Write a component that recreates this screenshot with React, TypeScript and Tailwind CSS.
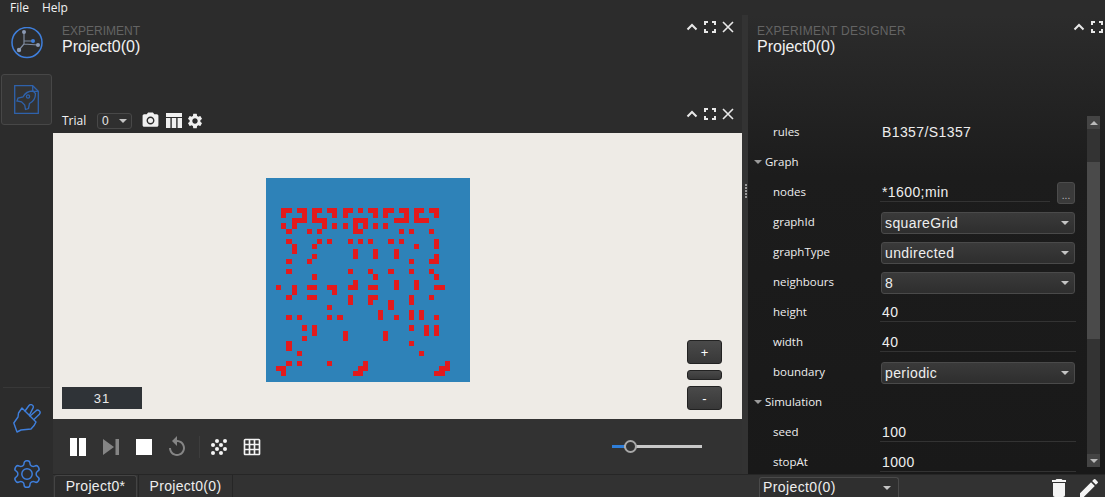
import { MdDelete, MdEdit, MdGridOn, MdPhotoCamera, MdReplay, MdSettings } from "react-icons/md";

// live cells per row of the 40x40 lattice
const cells: Record<number, number[]> = {
  6: [3, 4, 6, 7, 9, 10, 12, 13, 15, 16, 18, 20, 21, 23, 24, 26, 27, 29, 30, 32, 33],
  7: [3, 7, 9, 13, 15, 21, 23, 27, 29, 33],
  8: [5, 6, 7, 9, 10, 11, 17, 18, 19, 25, 26, 27, 29, 30, 31],
  9: [3, 5, 11, 13, 15, 17, 19, 21, 23],
  10: [4, 8, 10, 17, 18, 26, 28, 32],
  12: [4, 10, 12, 16, 18, 20, 24, 26, 33],
  13: [5, 9, 29, 33],
  14: [5, 17, 21, 25],
  15: [9, 17, 21, 25, 33],
  16: [4, 8, 28, 32, 33],
  18: [4, 16, 20, 24, 28, 32],
  19: [9, 21, 33],
  20: [17, 25, 29],
  21: [2, 5, 8, 9, 12, 13, 16, 17, 20, 21, 25, 29, 33, 34],
  22: [5, 13],
  23: [4, 8, 9, 16, 20, 21, 28, 32],
  24: [16, 20, 24, 28],
  25: [12, 24],
  26: [22, 28, 30],
  27: [4, 6, 12, 14, 22, 25, 28, 30, 33],
  29: [7, 9, 28, 31, 33],
  30: [9, 15, 23, 31, 33],
  31: [7, 15, 23],
  32: [4, 28],
  33: [4],
  34: [6, 30],
  36: [4, 6, 12, 19, 35],
  37: [2, 3, 18, 19, 34, 35],
  38: [3, 17, 18, 33, 34],
};

function PanelIcons({ close = true }: { close?: boolean }) {
  return (
    <div className="flex items-center gap-[6px] self-start">
      <svg width="12" height="8" viewBox="0 0 12 8" fill="none" stroke="#e8e8e8" strokeWidth="2">
        <path d="M1.5 6.5 6 2l4.5 4.5" />
      </svg>
      <svg width="12" height="12" viewBox="0 0 12 12" fill="none" stroke="#e8e8e8" strokeWidth="2">
        <path d="M1 4V1h3M8 1h3v3M11 8v3H8M4 11H1V8" />
      </svg>
      {close && (
        <svg width="12" height="12" viewBox="0 0 12 12" fill="none" stroke="#e8e8e8" strokeWidth="1.6">
          <path d="M1 1l10 10M11 1 1 11" />
        </svg>
      )}
    </div>
  );
}

function Caret({ color = "#c4c4c4" }: { color?: string }) {
  return <span className="h-0 w-0 border-x-[4px] border-t-[4px] border-x-transparent" style={{ borderTopColor: color }} />;
}

function Select({ value }: { value: string }) {
  return (
    <div className="ml-[1px] flex h-[22px] w-[194px] items-center justify-between rounded-[3px] border border-[#4a4a4a] bg-gradient-to-b from-[#3a3a3a] to-[#2e2e2e] pl-[3px] pr-[5px] text-[14px] tracking-[0.4px] text-[#eeeeee]">
      <span>{value}</span>
      <Caret />
    </div>
  );
}

function TextValue({ value }: { value: string }) {
  return (
    <div className="h-[18px] w-[196px] border-b border-[#333333] pl-[2px] text-[14px] leading-[16px] tracking-[0.4px] text-[#eeeeee]">
      {value}
    </div>
  );
}

function Row({ label, children }: { label: string; children: React.ReactNode }) {
  return (
    <div className="flex h-[30px] shrink-0 items-center pl-[25px]">
      <span className="w-[107px] pb-[2px] font-['Open_Sans',sans-serif] text-[11.5px] text-[#eeeeee]">{label}</span>
      {children}
    </div>
  );
}

function Section({ label }: { label: string }) {
  return (
    <div className="flex h-[30px] shrink-0 items-center gap-[3px] pb-[2px] pl-[6px] font-['Open_Sans',sans-serif] text-[11.5px] text-[#eeeeee]">
      <Caret color="#9a9a9a" />
      <span>{label}</span>
    </div>
  );
}

function ZoomButton({ label, small }: { label?: string; small?: boolean }) {
  return (
    <div
      className={`flex w-[35px] items-center justify-center rounded-[3px] border border-[#222222] bg-gradient-to-b from-[#4a4a4a] to-[#383838] text-[13px] leading-none text-white ${
        small ? "h-[10px]" : "h-[24px]"
      }`}
    >
      {label}
    </div>
  );
}

export default function App() {
  return (
    <div className="flex h-[497px] w-[1105px] flex-col overflow-hidden bg-[#2c2c2c] font-['Liberation_Sans',sans-serif] text-white">
      <div className="flex h-[15px] shrink-0 items-center gap-[13px] pl-[10px] pt-[1px] font-['Open_Sans',sans-serif] text-[12px] leading-[14px] text-[#f2f2f2]">
        <span>File</span>
        <span>Help</span>
      </div>

      <div className="flex min-h-0 flex-1">
        {/* sidebar */}
        <div className="flex w-[53px] shrink-0 flex-col items-center pt-[12px]">
          <svg width="32" height="32" viewBox="0 0 32 32" fill="none">
            <circle cx="16" cy="15.5" r="15" stroke="#3f7fdc" strokeWidth="1.5" />
            <path d="M13 5v12l-5 6M13 14h9M13 17l14 1" stroke="#7f8ba0" strokeWidth="1.2" />
            <circle cx="13" cy="5" r="2" fill="#8c9ab4" />
            <circle cx="22" cy="14" r="2" fill="#3f7fdc" />
            <circle cx="27" cy="18" r="2" fill="#8c9ab4" />
            <circle cx="8" cy="23" r="2.2" fill="#8c9ab4" />
          </svg>
          <div className="mt-[15px] flex h-[51px] w-[51px] items-center justify-center rounded-[3px] border border-[#474747] bg-[#333333]">
            <svg width="25" height="29" viewBox="0 0 25 29" fill="none" stroke="#2f62ab" strokeWidth="1.3">
              <path d="M.7.7h18l5.6 5.6v22H.7z" />
              <path d="M18.7.7v5.6h5.6" />
              <path d="M19 6c-4 0-8 2-10 6l-5 1-1 3 4.5.8 3.2 3.2.8 4.5 3-1 1-5c4-2 6-6 6-10z" />
              <circle cx="14" cy="11.5" r="1.6" />
            </svg>
          </div>
          <div className="mt-auto mb-[16px] h-px w-[47px] bg-[#383838]" />
          <svg width="28" height="29" viewBox="0 0 28 29" fill="none" stroke="#3f7fdc" strokeWidth="1.4" strokeLinejoin="round" strokeLinecap="round">
            <path d="M12 7 16 1.5a2.4 2.4 0 0 1 4 2.6L16.5 11" />
            <path d="M17 12 22.8 7a2.4 2.4 0 0 1 3.6 3.2L21 15.5" />
            <path d="M9 4 23 18c-1 3-3 5-5 7l-10 1-4 2-3.2-9L5 13l.5-4z" />
          </svg>
          <svg className="mt-[25px] mb-[7px]" width="32" height="32" viewBox="0 0 24 24" fill="none" stroke="#3f7fdc" strokeWidth="1.1">
            <path d="M12.22 2h-.44a2 2 0 0 0-2 2v.18a2 2 0 0 1-1 1.73l-.43.25a2 2 0 0 1-2 0l-.15-.08a2 2 0 0 0-2.73.73l-.22.38a2 2 0 0 0 .73 2.73l.15.1a2 2 0 0 1 1 1.72v.51a2 2 0 0 1-1 1.74l-.15.09a2 2 0 0 0-.73 2.73l.22.38a2 2 0 0 0 2.73.73l.15-.08a2 2 0 0 1 2 0l.43.25a2 2 0 0 1 1 1.73V20a2 2 0 0 0 2 2h.44a2 2 0 0 0 2-2v-.18a2 2 0 0 1 1-1.73l.43-.25a2 2 0 0 1 2 0l.15.08a2 2 0 0 0 2.73-.73l.22-.39a2 2 0 0 0-.73-2.73l-.15-.08a2 2 0 0 1-1-1.74v-.5a2 2 0 0 1 1-1.74l.15-.09a2 2 0 0 0 .73-2.73l-.22-.38a2 2 0 0 0-2.73-.73l-.15.08a2 2 0 0 1-2 0l-.43-.25a2 2 0 0 1-1-1.73V4a2 2 0 0 0-2-2z" />
            <circle cx="12" cy="12" r="3.9" />
          </svg>
        </div>

        {/* experiment panel */}
        <div className="flex min-w-0 flex-1 flex-col">
          <div className="flex min-h-0 flex-1">
            <div className="flex w-[689px] shrink-0 flex-col">
              <div className="flex h-[89px] shrink-0 justify-between pl-[9px] pr-[8px] pt-[6px]">
                <div className="pt-[3px]">
                  <div className="text-[12px] leading-[14px] text-[#646464]">EXPERIMENT</div>
                  <div className="text-[16px] leading-[18px] text-[#f2f2f2]">Project0(0)</div>
                </div>
                <PanelIcons />
              </div>

              <div className="flex h-[29px] shrink-0 items-center justify-between pl-[9px] pr-[8px] pt-[4px]">
                <div className="flex items-center">
                  <span className="w-[35px] font-['Open_Sans',sans-serif] text-[12px] text-[#f2f2f2]">Trial</span>
                  <div className="flex h-[16px] w-[35px] items-center justify-between rounded-[3px] border border-[#484848] bg-[#2f2f2f] pl-[4px] pr-[4px] text-[12px] text-[#e8e8e8]">
                    <span>0</span>
                    <Caret />
                  </div>
                  <MdPhotoCamera size={19} color="#f0f0f0" className="ml-[9px]" />
                  <svg className="ml-[6px]" width="16" height="15" viewBox="0 0 16 15" fill="#f0f0f0">
                    <path d="M0 0h16v4H0zM0 5h4.4v10H0zM5.8 5h4.4v10H5.8zM11.6 5H16v10h-4.4z" />
                  </svg>
                  <MdSettings size={18} color="#f0f0f0" className="ml-[4px]" />
                </div>
                <PanelIcons />
              </div>

              {/* simulation view */}
              <div className="relative h-[286px] shrink-0 bg-[#eeebe6] pl-[213px] pt-[44px]">
                <svg width="204" height="205" viewBox="0 0 40 40" shapeRendering="crispEdges" className="block">
                  <rect width="40" height="40" fill="#2e82b8" />
                  {Object.entries(cells).map(([row, cols]) =>
                    cols.map((col) => <rect key={`${row}-${col}`} x={col} y={Number(row)} width="1" height="1" fill="#e31a1c" />)
                  )}
                </svg>
                <div className="absolute bottom-[10px] left-[9px] flex h-[22px] w-[80px] items-center justify-center bg-[#2f3337] pt-[1px] text-[13px] tracking-[1px] text-[#e8e8e8]">
                  31
                </div>
                <div className="absolute bottom-[9px] right-[20px] flex flex-col gap-[6px]">
                  <ZoomButton label="+" />
                  <ZoomButton small />
                  <ZoomButton label="-" />
                </div>
              </div>

              {/* player controls */}
              <div className="flex h-[55px] shrink-0 items-center bg-[#323232] pl-[17px] pr-[40px]">
                <div className="flex h-[18px] w-[16px] justify-between">
                  <span className="h-full w-[7px] bg-white" />
                  <span className="h-full w-[7px] bg-white" />
                </div>
                <svg className="ml-[17px]" width="16" height="16" viewBox="0 0 16 16" fill="#858585">
                  <path d="M0 0l11 8-11 8zM12.5 0H16v16h-3.5z" />
                </svg>
                <span className="ml-[17px] h-[16px] w-[16px] bg-white" />
                <MdReplay size={24} color="#858585" className="ml-[13px]" />
                <span className="ml-[10px] h-[22px] w-px bg-[#3d3d3d]" />
                <svg className="ml-[11px]" width="16" height="16" viewBox="0 0 16 16" fill="#f4f4f4">
                  <circle cx="6" cy="2" r="2" />
                  <circle cx="14" cy="2" r="2" />
                  <circle cx="2" cy="6" r="2" />
                  <circle cx="10" cy="6" r="2" />
                  <circle cx="6" cy="10" r="2" />
                  <circle cx="14" cy="10" r="2" />
                  <circle cx="2" cy="14" r="2" />
                  <circle cx="10" cy="14" r="2" />
                </svg>
                <MdGridOn size={20} color="#f4f4f4" className="ml-[15px]" />
                <div className="relative ml-auto h-[3px] w-[90px] bg-[#c8c8c8]">
                  <div className="h-full w-[12px] bg-[#2f7ed8]" />
                  <div className="absolute left-[12px] top-[-5px] h-[13px] w-[13px] rounded-full border-2 border-[#a8a8a8] bg-[#323232]" />
                </div>
              </div>
            </div>

            <div className="flex w-[6px] shrink-0 flex-col justify-center gap-[1px] bg-[#333333] pl-[3px] pb-[108px]">
              <span className="h-[2px] w-[2px] bg-[#999999]" />
              <span className="h-[2px] w-[2px] bg-[#999999]" />
              <span className="h-[2px] w-[2px] bg-[#999999]" />
              <span className="h-[2px] w-[2px] bg-[#999999]" />
              <span className="h-[2px] w-[2px] bg-[#999999]" />
            </div>

            {/* designer panel */}
            <div className="flex min-w-0 flex-1 flex-col overflow-hidden bg-gradient-to-b from-[#2c2c2c] via-[#1c1c1c] via-35% to-[#191919]">
              <div className="flex h-[103px] shrink-0 justify-between pl-[9px] pr-[2px] pt-[6px]">
                <div className="pt-[3px]">
                  <div className="text-[12px] leading-[14px] tracking-[0.27px] text-[#646464]">EXPERIMENT DESIGNER</div>
                  <div className="text-[16px] leading-[18px] text-[#f2f2f2]">Project0(0)</div>
                </div>
                <PanelIcons close={false} />
              </div>
              <div className="flex min-h-0 flex-1">
                <div className="flex min-w-0 flex-1 flex-col overflow-hidden">
                  <Row label="rules">
                    <span className="pb-[2px] pl-[2px] text-[14px] tracking-[0.4px] text-[#eeeeee]">B1357/S1357</span>
                  </Row>
                  <Section label="Graph" />
                  <Row label="nodes">
                    <div className="relative">
                      <div className="h-[18px] w-[170px] border-b border-[#333333] pl-[2px] text-[14px] leading-[16px] tracking-[0.4px] text-[#eeeeee]">
                        *1600;min
                      </div>
                      <div className="absolute left-[177px] top-[-2px] flex h-[22px] w-[18px] items-end justify-center rounded-[3px] border border-[#4c4c4c] bg-[#3a3a3a] pb-[2px] text-[10px] leading-none text-[#bbbbbb]">
                        ...
                      </div>
                    </div>
                  </Row>
                  <Row label="graphId">
                    <Select value="squareGrid" />
                  </Row>
                  <Row label="graphType">
                    <Select value="undirected" />
                  </Row>
                  <Row label="neighbours">
                    <Select value="8" />
                  </Row>
                  <Row label="height">
                    <TextValue value="40" />
                  </Row>
                  <Row label="width">
                    <TextValue value="40" />
                  </Row>
                  <Row label="boundary">
                    <Select value="periodic" />
                  </Row>
                  <Section label="Simulation" />
                  <Row label="seed">
                    <TextValue value="100" />
                  </Row>
                  <Row label="stopAt">
                    <TextValue value="1000" />
                  </Row>
                </div>
                {/* scrollbar */}
                <div className="mr-[5px] mt-[-2px] flex h-[351px] w-[13px] shrink-0 flex-col">
                  <div className="flex h-[13px] items-center justify-center bg-[#444444]">
                    <span className="h-0 w-0 border-x-[4px] border-b-[4px] border-x-transparent border-b-[#bbbbbb]" />
                  </div>
                  <div className="h-[33px] bg-[#333333]" />
                  <div className="h-[177px] bg-[#4a4a4a]" />
                  <div className="flex-1 bg-[#333333]" />
                  <div className="flex h-[13px] items-center justify-center bg-[#444444]">
                    <Caret color="#bbbbbb" />
                  </div>
                </div>
              </div>
            </div>
          </div>

          {/* bottom bar */}
          <div className="flex h-[23px] shrink-0 items-end border-t border-[#262626] bg-[#323232]">
            <div className="ml-[1px] flex h-[22px] w-[83px] items-center justify-center rounded-t-[3px] border border-b-0 border-[#444444] bg-[#2c2c2c] text-[14px] tracking-[0.3px] text-[#eeeeee]">
              Project0*
            </div>
            <div className="ml-[1px] flex h-[22px] w-[95px] items-center justify-center border-x border-[#262626] text-[14px] tracking-[0.3px] text-[#eeeeee]">
              Project0(0)
            </div>
            <div className="ml-[526px] flex h-[20px] w-[140px] items-center justify-between rounded-t-[3px] border border-b-0 border-[#4a4a4a] bg-[#2f2f2f] pl-[3px] pr-[7px] text-[14px] tracking-[0.4px] text-[#eeeeee]">
              <span>Project0(0)</span>
              <Caret />
            </div>
            <div className="ml-auto mr-[4px] mt-[1px] flex items-center gap-[6px] self-start">
              <MdDelete size={24} color="#f4f4f4" />
              <MdEdit size={24} color="#f4f4f4" />
            </div>
          </div>
        </div>
      </div>
    </div>
  );
}
